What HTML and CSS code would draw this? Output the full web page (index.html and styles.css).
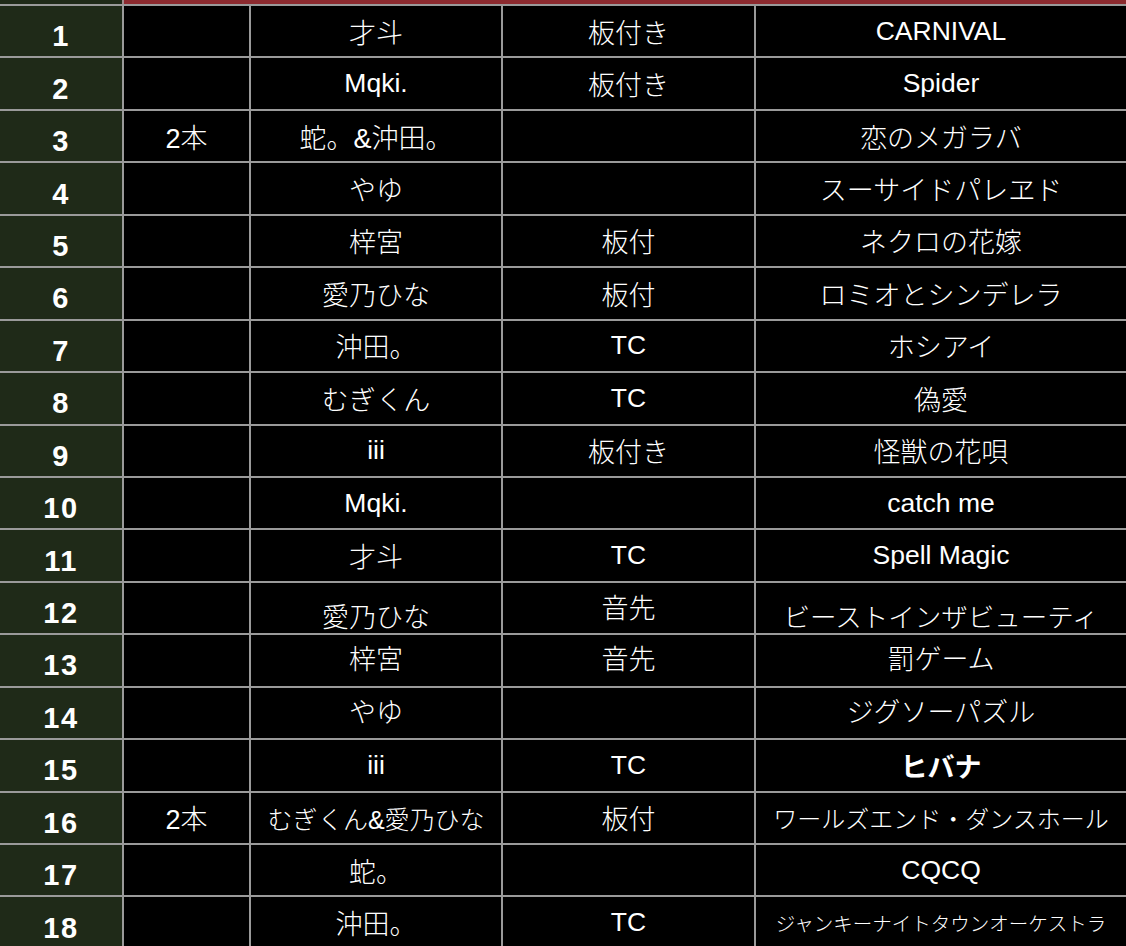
FILE: index.html
```html
<!DOCTYPE html>
<html lang="ja">
<head>
<meta charset="utf-8">
<title>Setlist</title>
<link rel="stylesheet" href="styles.css">
</head>
<body>
<div class="band">
  <div class="band-num"></div>
  <div class="band-red"></div>
</div>
<div class="grid">
  <div class="num">1</div><div class="c"></div><div class="c">才斗</div><div class="c">板付き</div><div class="c lat">CARNIVAL</div>
  <div class="num">2</div><div class="c"></div><div class="c lat">Mqki.</div><div class="c">板付き</div><div class="c lat">Spider</div>
  <div class="num">3</div><div class="c">2本</div><div class="c">蛇。&amp;沖田。</div><div class="c"></div><div class="c">恋のメガラバ</div>
  <div class="num">4</div><div class="c"></div><div class="c">やゆ</div><div class="c"></div><div class="c">スーサイドパレヱド</div>
  <div class="num">5</div><div class="c"></div><div class="c">梓宮</div><div class="c">板付</div><div class="c">ネクロの花嫁</div>
  <div class="num">6</div><div class="c"></div><div class="c">愛乃ひな</div><div class="c">板付</div><div class="c">ロミオとシンデレラ</div>
  <div class="num">7</div><div class="c"></div><div class="c">沖田。</div><div class="c lat">TC</div><div class="c">ホシアイ</div>
  <div class="num">8</div><div class="c"></div><div class="c">むぎくん</div><div class="c lat">TC</div><div class="c">偽愛</div>
  <div class="num">9</div><div class="c"></div><div class="c lat">iii</div><div class="c">板付き</div><div class="c">怪獣の花唄</div>
  <div class="num">10</div><div class="c"></div><div class="c lat">Mqki.</div><div class="c"></div><div class="c lat">catch me</div>
  <div class="num">11</div><div class="c"></div><div class="c">才斗</div><div class="c lat">TC</div><div class="c lat">Spell Magic</div>
  <div class="num">12</div><div class="c"></div><div class="c low">愛乃ひな</div><div class="c high">音先</div><div class="c low fit">ビーストインザビューティ</div>
  <div class="num">13</div><div class="c"></div><div class="c up">梓宮</div><div class="c up">音先</div><div class="c up">罰ゲーム</div>
  <div class="num">14</div><div class="c"></div><div class="c up">やゆ</div><div class="c"></div><div class="c up">ジグソーパズル</div>
  <div class="num">15</div><div class="c"></div><div class="c lat">iii</div><div class="c lat">TC</div><div class="c bold">ヒバナ</div>
  <div class="num">16</div><div class="c">2本</div><div class="c mid">むぎくん&amp;愛乃ひな</div><div class="c">板付</div><div class="c small">ワールズエンド・ダンスホール</div>
  <div class="num">17</div><div class="c"></div><div class="c">蛇。</div><div class="c"></div><div class="c lat">CQCQ</div>
  <div class="num">18</div><div class="c"></div><div class="c">沖田。</div><div class="c lat">TC</div><div class="c tiny">ジャンキーナイトタウンオーケストラ</div>
</div>
</body>
</html>
```
FILE: styles.css
```css
html, body {
  margin: 0;
  padding: 0;
  background: #000;
  overflow: hidden;
}
body {
  width: 1126px;
  height: 946px;
  font-family: "Liberation Sans", "Noto Sans CJK JP", sans-serif;
  color: #fff;
}
.band {
  display: flex;
  height: 4px;
}
.band-num {
  width: 122px;
  background: #1f2a18;
}
.band-red {
  flex: 1;
  background: #8c2a2f;
  border-left: 2px solid #a08a8a;
}
.grid {
  display: grid;
  grid-template-columns: 122px 125px 250px 251px 370px;
  grid-template-rows: repeat(18, 50.44px);
  gap: 2px;
  padding-top: 2px;
  background: #9a9a9a;
}
.num {
  background: #1f2a18;
  display: flex;
  align-items: center;
  justify-content: center;
  font-weight: bold;
  font-size: 29px;
  letter-spacing: 1.5px;
  padding-top: 11px;
  box-sizing: border-box;
}
.c {
  background: #000;
  display: flex;
  align-items: center;
  justify-content: center;
  font-size: 27px;
  font-weight: 300;
  white-space: nowrap;
  box-sizing: border-box;
}
.c.lat {
  font-weight: 400;
  font-size: 26.5px;
}
.low { padding-top: 14px; }
.high { padding-bottom: 4px; }
.up { padding-bottom: 5px; }
.bold { font-weight: bold; }
.fit { font-size: 26.5px; }
.mid { font-size: 25px; }
.small { font-size: 24px; }
.tiny { font-size: 19.5px; }
```
